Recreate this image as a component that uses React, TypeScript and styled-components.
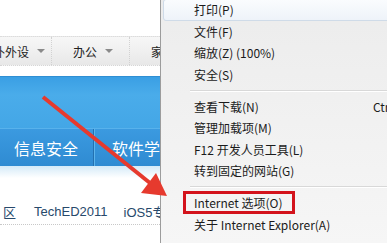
import styled, { createGlobalStyle } from 'styled-components';

const GlobalStyle = createGlobalStyle`
  html, body {
    margin: 0;
    padding: 0;
    background: #fff;
    overflow: hidden;
  }
`;

const Screen = styled.div`
  position: relative;
  display: flex;
  width: 387px;
  height: 243px;
  overflow: hidden;
  font-family: "Noto Sans CJK SC", "Liberation Sans", sans-serif;
`;

const Page = styled.div`
  flex: 0 0 160px;
  display: flex;
  flex-direction: column;
  overflow: hidden;
  background: #fff;
`;

const TopBlank = styled.div`
  height: 36px;
`;

const NavBar = styled.div`
  height: 30px;
  display: flex;
  align-items: center;
  background: linear-gradient(#f7f7f7, #e8e8e8);
  border-top: 1px dotted #dcdcdc;
  border-bottom: 1px dotted #d6d6d6;
  box-sizing: border-box;
  font-size: 12px;
  color: #222;
  white-space: nowrap;
`;

const NavItem = styled.div<{ $w: number; $first?: boolean }>`
  flex: 0 0 ${(p) => p.$w}px;
  display: flex;
  align-items: center;
  height: 100%;
  padding-left: ${(p) => (p.$first ? 0 : 21)}px;
  margin-left: ${(p) => (p.$first ? -7 : 0)}px;
  box-sizing: border-box;
  border-right: 1px dotted #d2d2d2;
  &:last-child {
    border-right: none;
  }
`;

const Caret = styled.span`
  margin-left: 8px;
  width: 0;
  height: 0;
  border-left: 4px solid transparent;
  border-right: 4px solid transparent;
  border-top: 4px solid #8a8a8a;
`;

const Gap = styled.div`
  height: 10px;
`;

const BlueBand = styled.div`
  height: 89px;
  display: flex;
  flex-direction: column;
  justify-content: flex-end;
  background: linear-gradient(#3a9fe4, #4aacea 20%, #43a6e6 60%, #3b9de0);
  border-top: 1px solid #2f8fd3;
`;

const TabRow = styled.div`
  height: 37px;
  display: flex;
  background: linear-gradient(#3b9ae0, #2f8bd2);
  border-top: 1px solid #58b2ec;
`;

const Tab = styled.div<{ $w: number; $pad: number }>`
  flex: 0 0 ${(p) => p.$w}px;
  display: flex;
  align-items: center;
  padding-left: ${(p) => p.$pad}px;
  box-sizing: border-box;
  color: #fff;
  font-size: 16px;
  white-space: nowrap;
  border-right: 1px solid #2370b0;
  box-shadow: 1px 0 0 #5cb4ec;
`;

const Fade = styled.div`
  height: 12px;
  background: linear-gradient(#d4eaf8, #fff);
`;

const LinkRow = styled.div`
  margin-top: 20px;
  height: 26px;
  display: flex;
  align-items: center;
  gap: 16px;
  white-space: nowrap;
  padding-left: 3px;
  font-size: 13px;
  color: #27496b;
  font-family: "Liberation Sans", "Noto Sans CJK SC", sans-serif;
  border-bottom: 1px dotted #c8c8c8;
`;

const LinkText = styled.span<{ $shift?: number }>`
  margin-left: ${(p) => p.$shift ?? 0}px;
`;

const Menu = styled.div`
  flex: 0 0 260px;
  display: flex;
  flex-direction: column;
  padding: 0 2px;
  margin-top: -1px;
  border-left: 1px solid #9c9c9c;
  background: linear-gradient(#ececec, #f0f0f0 40%, #f6f6f6);
  font-size: 12px;
  color: #1b1b1b;
`;

const Item = styled.div<{ $hot?: boolean }>`
  height: 21.6px;
  display: grid;
  grid-template-columns: 30px 179px auto;
  align-items: center;
  box-sizing: border-box;
  white-space: nowrap;
  border-radius: 3px;
  border: 1px solid ${(p) => (p.$hot ? '#cfdbe8' : 'transparent')};
  background: ${(p) => (p.$hot ? 'linear-gradient(#fafcfe, #eef3f9)' : 'transparent')};
`;

const Label = styled.span<{ $boxed?: boolean }>`
  grid-column: 2;
  justify-self: start;
  ${(p) =>
    p.$boxed &&
    `
    padding: 0 9px 0 8px;
    margin-left: -8px;
    line-height: 17px;
    outline: 3px solid #d3131c;
  `}
`;

const Shortcut = styled.span`
  grid-column: 3;
`;

const Separator = styled.div`
  height: 10px;
  display: flex;
  align-items: center;
  padding-left: 27px;
  &::after {
    content: '';
    flex: 1;
    height: 1px;
    background: #d8d8d8;
    box-shadow: 0 1px 0 #ffffff;
  }
`;

const ArrowLayer = styled.svg`
  position: absolute;
  left: 0;
  top: 0;
  pointer-events: none;
`;

const items1 = ['打印(P)', '文件(F)', '缩放(Z) (100%)', '安全(S)'];
const items2 = ['查看下载(N)', '管理加载项(M)', 'F12 开发人员工具(L)', '转到固定的网站(G)'];

export default function App() {
  return (
    <>
      <GlobalStyle />
      <Screen>
        <Page>
          <TopBlank />
          <NavBar>
            <NavItem $w={59} $first>
              扑外设<Caret />
            </NavItem>
            <NavItem $w={78}>
              办公<Caret />
            </NavItem>
            <NavItem $w={40}>家电</NavItem>
          </NavBar>
          <Gap />
          <BlueBand>
            <TabRow>
              <Tab $w={94} $pad={14}>信息安全</Tab>
              <Tab $w={90} $pad={18}>软件学院</Tab>
            </TabRow>
          </BlueBand>
          <Fade />
          <LinkRow>
            <LinkText>区</LinkText>
            <LinkText $shift={2}>TechED2011</LinkText>
            <LinkText>iOS5专题</LinkText>
          </LinkRow>
        </Page>
        <Menu>
          {items1.map((t, i) => (
            <Item key={t} $hot={i === 0}>
              <Label>{t}</Label>
            </Item>
          ))}
          <Separator />
          {items2.map((t, i) => (
            <Item key={t}>
              <Label>{t}</Label>
              {i === 0 && <Shortcut>Ctrl+J</Shortcut>}
            </Item>
          ))}
          <Separator />
          <Item>
            <Label $boxed>Internet 选项(O)</Label>
          </Item>
          <Item>
            <Label>关于 Internet Explorer(A)</Label>
          </Item>
        </Menu>
        <ArrowLayer width="387" height="243" viewBox="0 0 387 243">
          <line x1="43" y1="97" x2="150" y2="183" stroke="#e63a2e" strokeWidth="4" />
          <polygon points="141,193 156,173 167,196" fill="#e63a2e" />
        </ArrowLayer>
      </Screen>
    </>
  );
}
